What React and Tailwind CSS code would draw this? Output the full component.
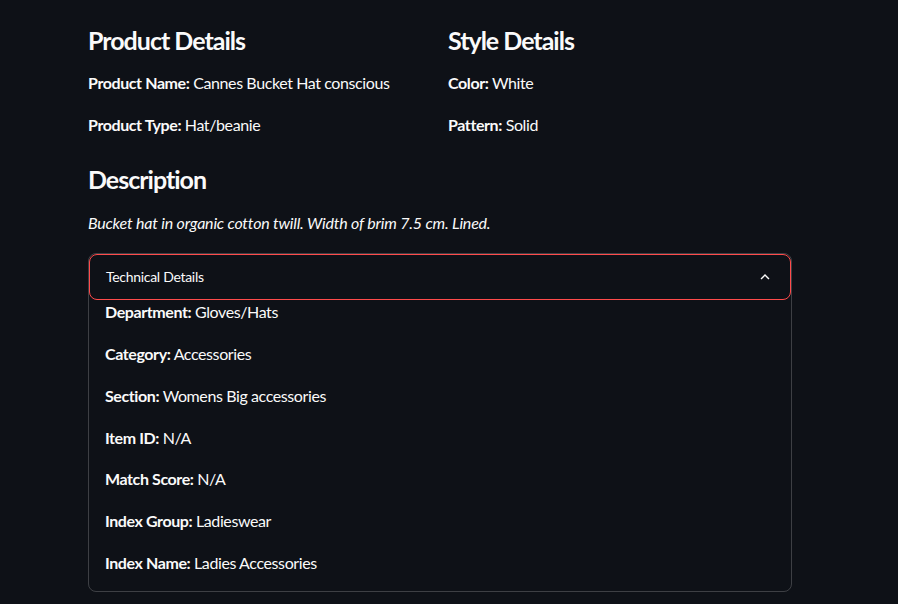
const font = { fontFamily: '"Lato", "Noto Sans", sans-serif' };

function Field({ label, value }) {
  return (
    <p className="text-base leading-[25.6px] tracking-[-0.4px] text-[#fafafa]">
      <span className="font-bold">{label}:</span> {value}
    </p>
  );
}

const techRows = [
  ["Department", "Gloves/Hats"],
  ["Category", "Accessories"],
  ["Section", "Womens Big accessories"],
  ["Item ID", "N/A"],
  ["Match Score", "N/A"],
  ["Index Group", "Ladieswear"],
  ["Index Name", "Ladies Accessories"],
];

export default function App() {
  return (
    <div
      className="min-h-screen w-full bg-[#0e1117] text-[#fafafa] pl-[88px] pt-[23px]"
      style={font}
    >
      <div className="w-[704px]">
        {/* two columns */}
        <div className="grid grid-cols-2 gap-4">
          <div className="flex flex-col">
            <h3 className="text-[25px] leading-[34px] tracking-[-1px] font-bold">Product Details</h3>
            <div className="mt-[13px] flex flex-col gap-4">
              <Field label="Product Name" value="Cannes Bucket Hat conscious" />
              <Field label="Product Type" value="Hat/beanie" />
            </div>
          </div>
          <div className="flex flex-col">
            <h3 className="text-[25px] leading-[34px] tracking-[-1px] font-bold">Style Details</h3>
            <div className="mt-[13px] flex flex-col gap-4">
              <Field label="Color" value="White" />
              <Field label="Pattern" value="Solid" />
            </div>
          </div>
        </div>

        {/* description */}
        <h3 className="mt-[25px] text-[25px] leading-[34px] tracking-[-1px] font-bold">Description</h3>
        <p className="mt-[14px] text-base leading-[26px] tracking-[-0.2px] italic">
          Bucket hat in organic cotton twill. Width of brim 7.5 cm. Lined.
        </p>

        {/* expander */}
        <div className="mt-[17px] rounded-lg border border-[rgba(250,250,250,0.2)] pb-4">
          <div className="flex h-[46px] items-center justify-between rounded-lg border border-[#ff4b4b] pl-4 pr-4">
            <span className="text-sm tracking-[-0.3px]">Technical Details</span>
            <svg width="18" height="18" viewBox="0 0 24 24" fill="#fafafa">
              <path d="M7.41 15.41L12 10.83l4.59 4.58L18 14l-6-6-6 6z" />
            </svg>
          </div>
          <div className="-mt-px flex flex-col gap-[16.2px] px-4">
            {techRows.map(([k, v]) => (
              <Field key={k} label={k} value={v} />
            ))}
          </div>
        </div>
      </div>
    </div>
  );
}
